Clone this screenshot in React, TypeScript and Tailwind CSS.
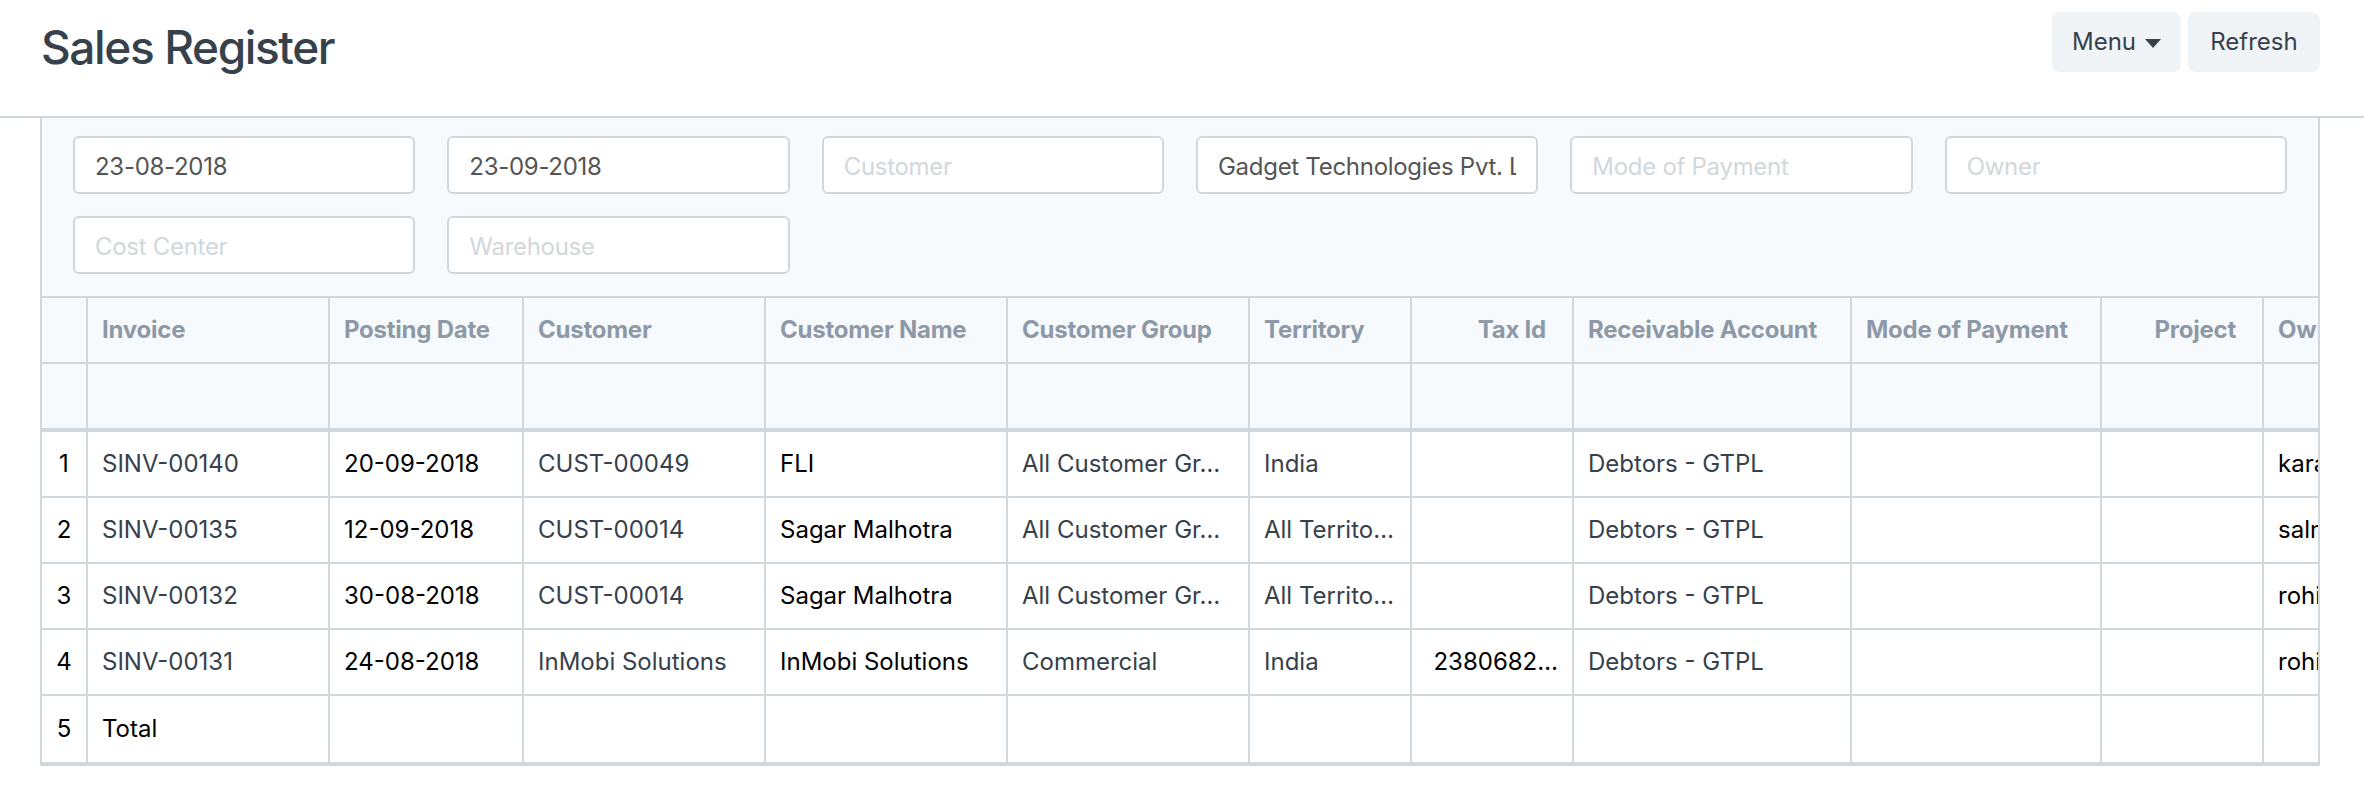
import React from "react";

type Col = { w: string; label: string; link?: boolean; right?: boolean };

const cols: Col[] = [
  { w: "w-[242px]", label: "Invoice", link: true },
  { w: "w-[194px]", label: "Posting Date" },
  { w: "w-[242px]", label: "Customer", link: true },
  { w: "w-[242px]", label: "Customer Name" },
  { w: "w-[242px]", label: "Customer Group", link: true },
  { w: "w-[162px]", label: "Territory", link: true },
  { w: "w-[162px]", label: "Tax Id", right: true },
  { w: "w-[278px]", label: "Receivable Account", link: true },
  { w: "w-[250px]", label: "Mode of Payment", link: true },
  { w: "w-[162px]", label: "Project", right: true },
  { w: "w-[242px]", label: "Owner" },
];

const rows: string[][] = [
  ["SINV-00140", "20-09-2018", "CUST-00049", "FLI", "All Customer Gr…", "India", "", "Debtors - GTPL", "", "", "karan@gadget.com"],
  ["SINV-00135", "12-09-2018", "CUST-00014", "Sagar Malhotra", "All Customer Gr…", "All Territo…", "", "Debtors - GTPL", "", "", "salman@gadget.com"],
  ["SINV-00132", "30-08-2018", "CUST-00014", "Sagar Malhotra", "All Customer Gr…", "All Territo…", "", "Debtors - GTPL", "", "", "rohit@gadget.com"],
  ["SINV-00131", "24-08-2018", "InMobi Solutions", "InMobi Solutions", "Commercial", "India", "2380682…", "Debtors - GTPL", "", "", "rohit@gadget.com"],
  ["Total", "", "", "", "", "", "", "", "", "", ""],
];

const filters: { v: string; ph?: boolean }[] = [
  { v: "23-08-2018" },
  { v: "23-09-2018" },
  { v: "Customer", ph: true },
  { v: "Gadget Technologies Pvt. Ltd." },
  { v: "Mode of Payment", ph: true },
  { v: "Owner", ph: true },
  { v: "Cost Center", ph: true },
  { v: "Warehouse", ph: true },
];

function Input({ v, ph }: { v: string; ph?: boolean }) {
  return (
    <div className="h-[58px] bg-white border-2 border-[#d1d8dd] rounded-[6px] px-[20px] flex items-center">
      <div
        className={
          "overflow-hidden whitespace-nowrap text-[24px] leading-[30px] mt-[3px] tracking-[-0.012em] " +
          (ph ? "text-[#d1d8dd]" : "text-[#555555]")
        }
      >
        {v}
      </div>
    </div>
  );
}

export default function App() {
  return (
    <div className="w-full min-h-[802px] bg-white font-['Inter','Liberation_Sans',sans-serif] text-[#36414C]">
      {/* Page header */}
      <div className="h-[118px] border-b-2 border-[#d1d8dd] flex items-start justify-between pl-[41px] pr-[44px]">
        <h1 className="mt-[22px] text-[46px] leading-[50px] font-medium tracking-[-0.03em] text-[#36414C]">
          Sales Register
        </h1>
        <div className="mt-[12px] flex gap-[7px]">
          <button className="w-[129px] h-[60px] rounded-[8px] bg-[#F0F4F7] flex items-center justify-center gap-[9px] text-[24px] text-[#36414C]">
            <span>Menu</span>
            <svg width="16" height="9" viewBox="0 0 16 9" className="mt-[2px]">
              <path d="M0 0 L16 0 L8 9 Z" fill="#36414C" />
            </svg>
          </button>
          <button className="w-[132px] h-[60px] rounded-[8px] bg-[#F0F4F7] flex items-center justify-center text-[24px] text-[#36414C]">
            Refresh
          </button>
        </div>
      </div>

      {/* Report panel */}
      <div className="ml-[40px] mr-[44px] border-l-2 border-r-2 border-[#d1d8dd] bg-[#F7FAFC] overflow-hidden">
        {/* Filters */}
        <div className="px-[31px] pt-[18px] pb-[22px] border-b-2 border-[#d1d8dd] grid grid-cols-6 gap-x-[32px] gap-y-[22px]">
          {filters.map((f, i) => (
            <Input key={i} v={f.v} ph={f.ph} />
          ))}
        </div>

        {/* Table */}
        <div className="overflow-hidden border-b-4 border-[#d1d8dd]">
          <div className="w-max">
            {/* header row */}
            <div className="flex h-[66px] bg-[#F7FAFC]">
              <div className="w-[46px] shrink-0 border-r-2 border-b-2 border-[#d1d8dd]" />
              {cols.map((c, i) => (
                <div
                  key={i}
                  className={
                    c.w +
                    " shrink-0 border-r-2 border-b-2 border-[#d1d8dd] flex items-center text-[24px] font-bold tracking-[-0.01em] text-[#8D99A6] whitespace-nowrap overflow-hidden " +
                    (c.right ? "justify-end pr-[26px] pl-[14px]" : "pl-[14px] pr-[14px]")
                  }
                >
                  {c.label}
                </div>
              ))}
            </div>
            {/* filter row */}
            <div className="flex h-[68px] bg-[#F7FAFC] border-b-4 border-[#d1d8dd]">
              <div className="w-[46px] shrink-0 border-r-2 border-[#d1d8dd]" />
              {cols.map((c, i) => (
                <div key={i} className={c.w + " shrink-0 border-r-2 border-[#d1d8dd]"} />
              ))}
            </div>
            {/* body */}
            {rows.map((r, ri) => (
              <div key={ri} className="flex h-[66px] bg-white">
                <div
                  className={
                    "w-[46px] shrink-0 border-r-2 border-[#d1d8dd] flex items-center justify-center text-[24px] text-black " +
                    (ri < rows.length - 1 ? "border-b-2" : "")
                  }
                >
                  {ri + 1}
                </div>
                {cols.map((c, ci) => {
                  const val = r[ci];
                  const isTotal = ri === rows.length - 1;
                  const color = c.link && !isTotal ? "text-[#36414C]" : "text-black";
                  return (
                    <div
                      key={ci}
                      className={
                        c.w +
                        " shrink-0 border-r-2 border-[#d1d8dd] flex items-center text-[24px] whitespace-nowrap overflow-hidden " +
                        color +
                        " " +
                        (ri < rows.length - 1 ? "border-b-2 " : "") +
                        (c.right ? "justify-end px-[14px]" : "px-[14px]")
                      }
                    >
                      <span className="overflow-hidden whitespace-nowrap">{val}</span>
                    </div>
                  );
                })}
              </div>
            ))}
          </div>
        </div>
      </div>
    </div>
  );
}
